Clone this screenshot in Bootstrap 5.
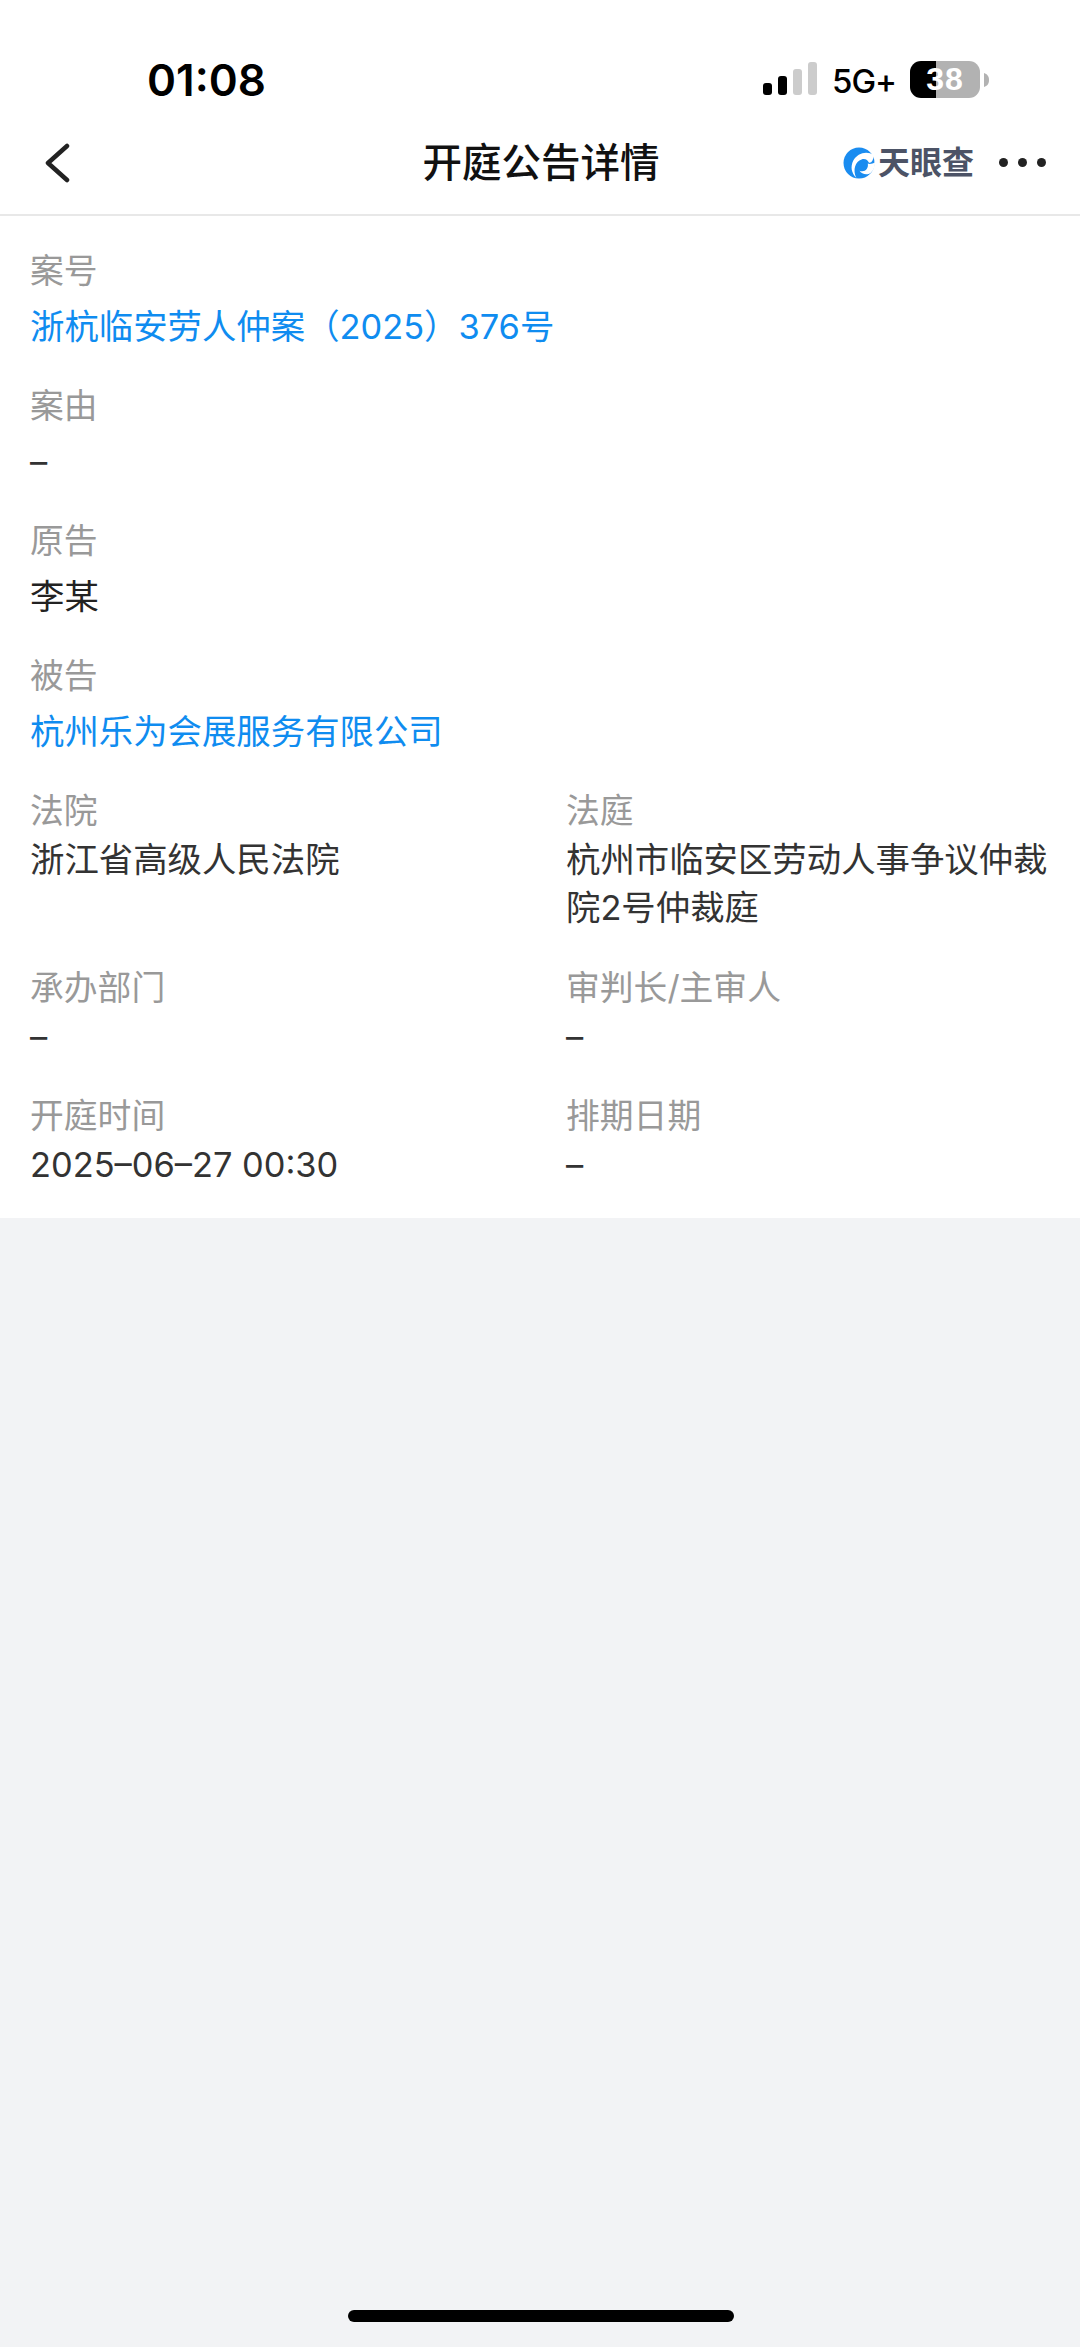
<!DOCTYPE html>
<html lang="zh-CN">

<head>
    <meta charset="UTF-8">
    <meta name="viewport" content="width=device-width, initial-scale=1.0">
    <title>开庭公告详情</title>
    <link href="https://cdn.jsdelivr.net/npm/bootstrap@5.3.2/dist/css/bootstrap.min.css" rel="stylesheet">
    <style>
        html, body { height: 100%; }
        body {
            background: #f2f3f5;
            font-family: "Inter", "Noto Sans CJK SC", sans-serif;
            position: relative;
        }
        .status-line { height: 130px; padding: 56px 0 0 147px; }
        .clock { font: 600 44px/48px "Inter", "Liberation Sans", sans-serif; color: #000; width: 616px; letter-spacing: 0px; }
        .net-text { font: 500 33px/40px "Inter", "Liberation Sans", sans-serif; color: #000; margin: 5px 14px 0 13px; letter-spacing: -1px; }
        .battery-box { width: 70px; height: 37px; margin-top: 5px; border-radius: 11px; overflow: hidden; background: linear-gradient(90deg, #000 37%, #b2b2b2 37%); color: #fff; font: 700 32px/37px "Liberation Sans", sans-serif; text-align: center; letter-spacing: 1px; }
        .top-bar { height: 86px; border-bottom: 2px solid #e8e8e8; padding: 0 34px 19px 44px; position: relative; }
        .page-title { position: absolute; left: 0; right: 0; top: 9px; text-align: center; font-size: 39.5px; line-height: 48px; font-weight: 500; color: #111; margin: 0; padding-left: 2px; }
        .brand-name { font-size: 32px; font-weight: 700; color: #4c5366; line-height: 36px; margin-left: 3px; }
        .more-dots { gap: 10px; margin-left: 25px; }
        .more-dots span { width: 9px; height: 9px; border-radius: 50%; background: #222; }
        .info-sheet { background: #fff; padding: 32px 30px 14px; height: 1002px; }
        .info-label { font-size: 33.8px; line-height: 46px; color: #999; }
        .info-value { font-size: 34.4px; line-height: 46px; color: #333; margin-top: 10px; }
        .info-value.is-link { color: #0f8cf0; }
        .info-value.is-name { color: #222; }
        .wide-item { height: 135px; }
        .half-grid { display: grid; grid-template-columns: 536px 1fr; }
        .half-grid .info-value { margin-top: 2px; line-height: 48px; }
        .half-a-tall { height: 177px; }
        .half-b { height: 128px; }
        .home-bar { position: absolute; left: 348px; top: 2310px; width: 386px; height: 12px; border-radius: 6px; background: #000; }
    </style>
</head>

<body>
    <div class="bg-white">
        <div class="status-line d-flex align-items-start">
            <div class="clock">01:08</div>
            <svg width="56" height="33" viewBox="0 0 56 33" style="margin-top:6px">
                <rect x="0" y="21" width="9" height="12" rx="3" fill="#000"/>
                <rect x="15" y="14" width="9" height="19" rx="3" fill="#000"/>
                <rect x="30" y="7" width="9" height="26" rx="3" fill="#ccc"/>
                <rect x="45" y="0" width="9" height="33" rx="3" fill="#ccc"/>
            </svg>
            <div class="net-text">5G+</div>
            <div class="battery-box">38</div>
            <svg width="6" height="14" viewBox="0 0 6 14" class="ms-1" style="margin-top:17px">
                <path d="M0 0c3 1 5 3 5 7s-2 6-5 7z" fill="#b2b2b2"/>
            </svg>
        </div>
        <div class="top-bar d-flex align-items-center justify-content-between">
            <svg width="26" height="40" viewBox="0 0 26 40">
                <path d="M23 3 4 20l19 17" fill="none" stroke="#222" stroke-width="4.5" stroke-linecap="round" stroke-linejoin="round"/>
            </svg>
            <h1 class="page-title">开庭公告详情</h1>
            <div class="d-flex align-items-center">
                <svg width="32" height="32" viewBox="0 0 31 31">
                    <circle cx="15.5" cy="15.5" r="15" fill="#1a8cf0"/>
                    <path d="M30 8C23 3 14 6 10 13 7 19 8 25 13 30 9 22 12 14 18 12c4-1 6 1 7 3 2 1 4-1 5-7z" fill="#fff"/>
                    <path d="M24 16c1 5-3 9-8 7 2 3 7 5 11 2 3-3 4-6 4-10-2 1-5 2-7 1z" fill="#fff"/>
                </svg>
                <span class="brand-name">天眼查</span>
                <div class="more-dots d-flex">
                    <span></span><span></span><span></span>
                </div>
            </div>
        </div>
    </div>

    <div class="info-sheet">
        <div class="wide-item">
            <div class="info-label">案号</div>
            <div class="info-value is-link">浙杭临安劳人仲案（2025）376号</div>
        </div>
        <div class="wide-item">
            <div class="info-label">案由</div>
            <div class="info-value">–</div>
        </div>
        <div class="wide-item">
            <div class="info-label">原告</div>
            <div class="info-value is-name">李某</div>
        </div>
        <div class="wide-item">
            <div class="info-label">被告</div>
            <div class="info-value is-link">杭州乐为会展服务有限公司</div>
        </div>
        <div class="half-grid">
            <div class="half-a-tall">
                <div class="info-label">法院</div>
                <div class="info-value">浙江省高级人民法院</div>
            </div>
            <div class="half-a-tall">
                <div class="info-label">法庭</div>
                <div class="info-value">杭州市临安区劳动人事争议仲裁院2号仲裁庭</div>
            </div>
            <div class="half-b">
                <div class="info-label">承办部门</div>
                <div class="info-value">–</div>
            </div>
            <div class="half-b">
                <div class="info-label">审判长/主审人</div>
                <div class="info-value">–</div>
            </div>
            <div>
                <div class="info-label">开庭时间</div>
                <div class="info-value">2025–06–27 00:30</div>
            </div>
            <div>
                <div class="info-label">排期日期</div>
                <div class="info-value">–</div>
            </div>
        </div>
    </div>

    <div class="home-bar"></div>

    <script src="https://cdn.jsdelivr.net/npm/bootstrap@5.3.2/dist/js/bootstrap.bundle.min.js"></script>
</body>

</html>
